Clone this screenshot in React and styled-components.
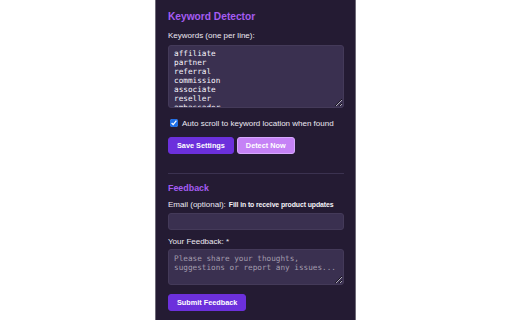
import React from "react";
import styled, { createGlobalStyle } from "styled-components";

const GlobalStyle = createGlobalStyle`
  html, body {
    margin: 0;
    padding: 0;
    background: #ffffff;
    font-family: "Liberation Sans", Arial, sans-serif;
  }
  * {
    box-sizing: border-box;
  }
`;

const Page = styled.div`
  display: flex;
  justify-content: center;
  width: 512px;
  height: 320px;
  padding-right: 1px;
  overflow: hidden;
`;

const Panel = styled.div`
  width: 201px;
  height: 320px;
  background: #241b33;
  border-left: 1px solid #6e6a78;
  border-right: 1px solid #6e6a78;
  padding: 11px 11px 0 12px;
  display: flex;
  flex-direction: column;
  color: #ece8f2;
`;

const Title = styled.h2`
  margin: 0;
  font-size: ${({ small }) => (small ? "8.9px" : "10.2px")};
  line-height: ${({ small }) => (small ? "11px" : "12px")};
  font-weight: 700;
  color: #a45cf2;
`;

const Label = styled.label`
  display: block;
  font-size: 8px;
  line-height: 10px;
  color: #ece8f2;
  margin-top: ${({ top }) => top || 0}px;
  margin-bottom: ${({ bottom }) => bottom || 0}px;
`;

const Hint = styled.span`
  font-size: 6.9px;
  font-weight: 700;
  margin-left: 3px;
  color: #f4f2f7;
  letter-spacing: -0.1px;
`;

const TextArea = styled.textarea`
  display: block;
  width: 176px;
  height: ${({ h }) => h}px;
  resize: vertical;
  background: #3a3050;
  border: 1px solid #443a59;
  border-radius: 3px;
  padding: ${({ padTop }) => padTop}px 5px 2px;
  font-family: "DejaVu Sans Mono", "Liberation Mono", monospace;
  font-size: 7.7px;
  line-height: 9px;
  color: #f7f4fb;
  overflow: hidden;
  outline: none;

  &::placeholder {
    color: #a39cae;
  }
`;

const Input = styled.input`
  display: block;
  width: 176px;
  height: 17px;
  background: #3a3050;
  border: 1px solid #443a59;
  border-radius: 3px;
  outline: none;
`;

const CheckRow = styled.label`
  display: flex;
  align-items: center;
  gap: 4px;
  margin-top: 10px;
  height: 10px;
  font-size: 8px;
  color: #ece8f2;

  input {
    margin: 0 0 0 2px;
    width: 8px;
    height: 8px;
    accent-color: #1f6fe8;
  }
`;

const ButtonRow = styled.div`
  display: flex;
  gap: 3px;
  margin-top: 9px;
`;

const Button = styled.button`
  height: 17px;
  padding: 0 ${({ pad }) => pad}px;
  border-radius: 3px;
  border: 1px solid ${({ light }) => (light ? "#d7a8ff" : "#6c30dc")};
  background: ${({ light }) => (light ? "#c582f6" : "#6c30dc")};
  color: #ffffff;
  font-family: "Liberation Sans", Arial, sans-serif;
  font-size: 7.3px;
  font-weight: 700;
  cursor: pointer;
  align-self: flex-start;
  margin-top: ${({ top }) => top || 0}px;
`;

const Divider = styled.hr`
  width: 176px;
  margin: 19px 0 9px;
  border: none;
  border-top: 1px solid #3b3250;
`;

export default function App() {
  return (
    <>
      <GlobalStyle />
      <Page>
        <Panel>
          <Title>Keyword Detector</Title>
          <Label top={8} bottom={4}>
            Keywords (one per line):
          </Label>
          <TextArea
            h={63}
            padTop={3}
            defaultValue={
              "affiliate\npartner\nreferral\ncommission\nassociate\nreseller\nambassador"
            }
          />
          <CheckRow>
            <input type="checkbox" defaultChecked />
            Auto scroll to keyword location when found
          </CheckRow>
          <ButtonRow>
            <Button pad={8}>Save Settings</Button>
            <Button light pad={8}>
              Detect Now
            </Button>
          </ButtonRow>
          <Divider />
          <Title small>Feedback</Title>
          <Label top={6} bottom={3}>
            Email (optional):<Hint>Fill in to receive product updates</Hint>
          </Label>
          <Input type="email" />
          <Label top={7} bottom={2}>
            Your Feedback: *
          </Label>
          <TextArea
            h={36}
            padTop={4}
            placeholder="Please share your thoughts, suggestions or report any issues..."
          />
          <Button pad={8} top={9}>
            Submit Feedback
          </Button>
        </Panel>
      </Page>
    </>
  );
}
